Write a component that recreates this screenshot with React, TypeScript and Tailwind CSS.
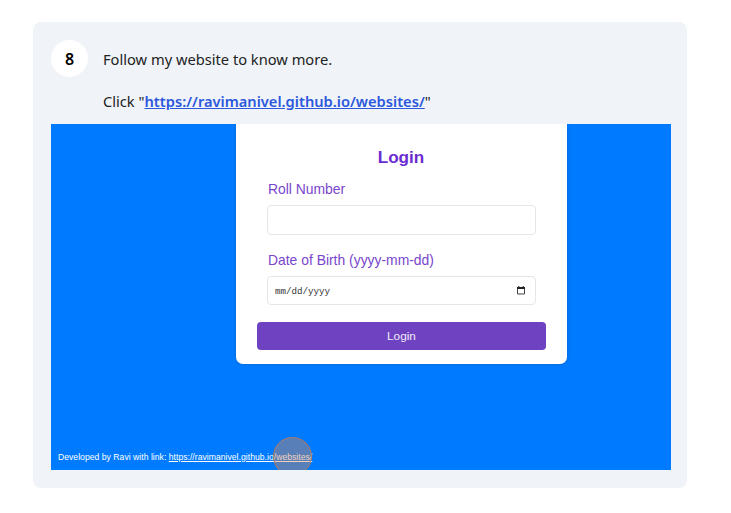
const noto = "font-['Noto_Sans',sans-serif]";

function CalendarIcon() {
  return (
    <svg width="8" height="9" viewBox="0 0 8 9" fill="none">
      <path d="M0.5 1.5h7v6.5h-7z" stroke="#444" />
      <path d="M0 1h8v2H0z" fill="#222" />
      <path d="M1.8 0v1.5M6.2 0v1.5" stroke="#222" />
    </svg>
  );
}

function LoginCard() {
  return (
    <div className="ml-[185px] h-[240.5px] w-[331px] rounded-b-[7px] bg-white px-[21px] shadow-[0_0_4px_rgba(0,0,0,0.15)]">
      <h1 className="h-[56px] pt-[22px] pr-[1px] text-center text-[17.1px] leading-[24px] font-bold text-[#6a2bd0]">
        Login
      </h1>
      <div className="px-[10px]">
        <label className="block h-[26px] pl-[1px] text-[13.9px] leading-[19px] whitespace-nowrap text-[#7a45cc]">
          Roll Number
        </label>
        <div className="-mt-px h-[30px] w-[269px] rounded-[4px] border border-[#e6e6e6]" />
        <label className="mt-[14px] block h-[27px] pl-[1px] text-[13.9px] leading-[22px] whitespace-nowrap text-[#7a45cc]">
          Date of Birth (yyyy-mm-dd)
        </label>
        <div className="flex h-[29px] w-[269px] items-center justify-between rounded-[4px] border border-[#e6e6e6] pr-[10px] pl-[7px]">
          <span className="pt-[3px] font-['Liberation_Mono',monospace] text-[9.2px] leading-[12px] text-[#333]">
            mm/dd/yyyy
          </span>
          <CalendarIcon />
        </div>
      </div>
      <button className="mt-[17px] block h-[28px] w-[289px] rounded-[4px] bg-[#6f42c1] text-center text-[11.8px] leading-[28px] text-[#f1ebfa]">
        Login
      </button>
    </div>
  );
}

function Preview() {
  return (
    <div className="relative ml-[18px] flex h-[346px] w-[620px] flex-col overflow-hidden bg-[#007bff] font-['Liberation_Sans',Arial,sans-serif]">
      <LoginCard />
      <p className="mt-auto mb-[7px] pl-[7px] text-[8.6px] leading-[12px] tracking-[0.03px] whitespace-nowrap text-white">
        Developed by Ravi with link: <a className="underline">https://ravimanivel.github.io/websites/</a>
      </p>
      <div className="absolute top-[313px] left-[222px] h-[39px] w-[39px] rounded-full border border-[#b17a62] bg-[#de8650]/40" />
    </div>
  );
}

export default function App() {
  return (
    <main className="h-[513px] w-[731px] overflow-hidden bg-white pt-[22px] pl-[33px]">
      <section className="h-[466px] w-[654px] rounded-[8px] bg-[#f0f3f8]">
        <div className={`flex h-[101.5px] pt-[18px] pl-[18px] text-[#222] ${noto}`}>
          <div className="flex h-[37px] w-[37px] items-center justify-center rounded-full bg-white text-[16px] font-semibold text-black">
            8
          </div>
          <div className="ml-[15px] whitespace-nowrap">
            <p className="h-[42px] text-[14.67px] leading-[38px]">Follow my website to know more.</p>
            <p className="text-[14.67px] leading-[38px]">
              Click "<a className="font-semibold text-[#2b58dc] underline">https://ravimanivel.github.io/websites/</a>"
            </p>
          </div>
        </div>
        <Preview />
      </section>
    </main>
  );
}
